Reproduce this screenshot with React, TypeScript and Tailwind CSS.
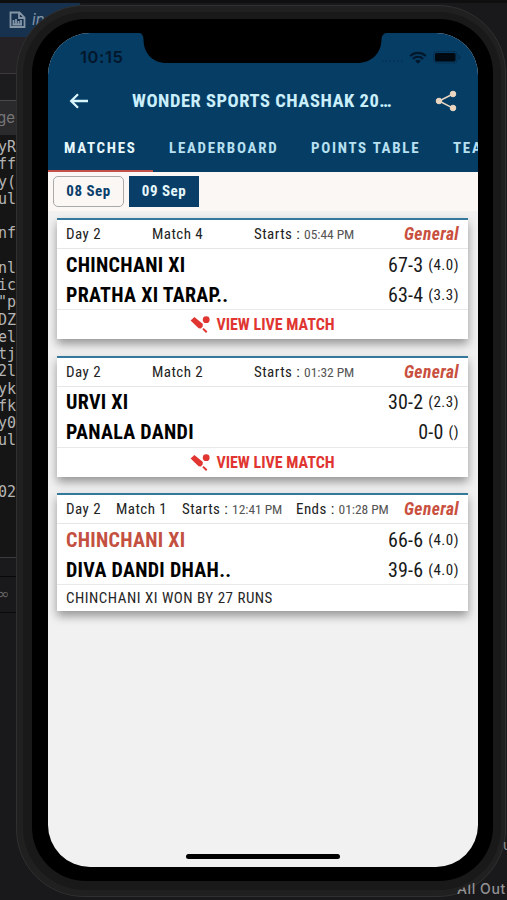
import React from "react";

const codeLines = ["yR", "ff", "y(", "ul", "", "nf", "", "nl", "ic", '"p', "DZ", "el", "tj", "2l", "yk", "fk", "y0", "ul", "", "", "02"];

type Match = {
  no: number;
  starts: string;
  ends?: string;
  teams: { name: string; score: string; overs: string; won?: boolean }[];
  result?: string;
};

const matches: Match[] = [
  {
    no: 4,
    starts: "05:44 PM",
    teams: [
      { name: "CHINCHANI XI", score: "67-3", overs: "(4.0)" },
      { name: "PRATHA XI TARAP..", score: "63-4", overs: "(3.3)" },
    ],
  },
  {
    no: 2,
    starts: "01:32 PM",
    teams: [
      { name: "URVI XI", score: "30-2", overs: "(2.3)" },
      { name: "PANALA DANDI", score: "0-0", overs: "()" },
    ],
  },
  {
    no: 1,
    starts: "12:41 PM",
    ends: "01:28 PM",
    teams: [
      { name: "CHINCHANI XI", score: "66-6", overs: "(4.0)", won: true },
      { name: "DIVA DANDI DHAH..", score: "39-6", overs: "(4.0)" },
    ],
    result: "CHINCHANI XI WON BY 27 RUNS",
  },
];

function BatIcon() {
  return (
    <svg width="20" height="18" viewBox="0 0 20 18" fill="#e03531" className="shrink-0">
      <path d="M0.600 4.600 4.400 1.100 12.900 8 12.600 10.200 11 12.600 8.600 12.200Z" />
      <path d="m12.300 13.200 1.400-1.300 3.700 3.700-1.400 1.400Z" />
      <circle cx="16.200" cy="3.700" r="3.400" />
    </svg>
  );
}

function MatchCard({ match }: { match: Match }) {
  const finished = Boolean(match.ends);
  return (
    <section className="border-t-2 border-[#34789b] bg-white shadow-[0_5px_9px_rgba(0,0,0,0.38)]">
      <div className="flex h-[29px] items-center whitespace-nowrap border-b border-[#e6e6e6] px-[9px] pt-px text-[15px] tracking-[0.45px] text-[#222]">
        <span className={finished ? "w-[50px]" : "w-[86px]"}>Day 2</span>
        <span className={finished ? "w-[66px]" : "w-[102px]"}>Match {match.no}</span>
        <span className={finished ? "w-[114px]" : ""}>
          Starts : <span className="text-[13.5px] tracking-[-0.05px] text-[#555]">{match.starts}</span>
        </span>
        {finished && (
          <span>
            Ends : <span className="text-[13.5px] tracking-[-0.05px] text-[#555]">{match.ends}</span>
          </span>
        )}
        <span className="-mt-px ml-auto text-[17.5px] font-bold italic leading-5 tracking-[0.4px] text-[#c94f3e]">General</span>
      </div>
      <div className="h-[60px]">
        {match.teams.map((team) => (
          <div key={team.name} className="flex h-[30px] items-center justify-between px-[9px] pt-px">
            <span className={`text-[20px] font-bold leading-6 tracking-[0.3px] ${team.won ? "text-[#c4503f]" : "text-black"}`}>
              {team.name}
            </span>
            <span className="flex items-center gap-[5px] text-[20px] leading-6 tracking-[0.15px] text-[#191919]">
              {team.score}
              <span className="text-[15px] tracking-[0.5px]">{team.overs}</span>
            </span>
          </div>
        ))}
      </div>
      {match.result ? (
        <div className="flex h-[27px] items-center border-t border-[#e9e9e9] pl-[9px] text-[15px] leading-5 tracking-[0.5px] text-[#262626]">
          {match.result}
        </div>
      ) : (
        <div className="flex h-[30px] items-center justify-center gap-[6px] border-t border-[#e9e9e9] pt-px text-[16px] font-bold text-[#e03531]">
          <BatIcon />
          VIEW LIVE MATCH
        </div>
      )}
    </section>
  );
}

function StatusBar() {
  return (
    <div className="flex h-[46px] shrink-0 justify-between pl-8 pr-[17px] pt-[13px] text-[#03172a]">
      <span className="font-['Inter',sans-serif] text-[16.5px] font-semibold leading-[22px] tracking-[0.6px] [font-stretch:100%]">10:15</span>
      <div className="flex h-[22px] items-center gap-[6px]">
        <span className="mt-2 w-[21px] border-t-2 border-dotted border-[#06355a]" />
        <svg width="18" height="13" viewBox="0 0 18 13" fill="none" stroke="currentColor" strokeWidth="2.1">
          <path d="M1.2 5a11.2 11.2 0 0 1 15.6 0M3.9 7.9a7.3 7.3 0 0 1 10.2 0" />
          <path d="M6.2 10.1a4 4 0 0 1 5.6 0L9 12.8Z" fill="currentColor" stroke="none" />
        </svg>
        <svg width="28" height="13" viewBox="0 0 28 13">
          <rect x="0.6" y="0.6" width="23.5" height="11.4" rx="3" fill="none" stroke="#063050" />
          <rect x="2" y="2" width="20.5" height="8.6" rx="1.5" fill="#000810" />
          <path d="M25.5 4v4.5q2-.5 2-2.2T25.5 4" fill="#063050" />
        </svg>
      </div>
    </div>
  );
}

function AppHeader() {
  return (
    <header className="h-[139px] shrink-0 bg-[#053d65]">
      <StatusBar />
      <div className="flex h-[43px] items-center pl-[21px] pr-[21px]">
        <svg width="20" height="16" viewBox="0 0 20 16" fill="none" stroke="#d8f5fb" strokeWidth="2.3" className="shrink-0">
          <path d="M9 1.3 2.2 8 9 14.7M2.4 8H19" />
        </svg>
        <h1 className="ml-[43px] w-[268px] whitespace-nowrap text-[18.5px] font-bold leading-6 tracking-[0.52px] text-[#caeffb]">
          WONDER SPORTS CHASHAK 20…
        </h1>
        <svg width="22" height="22" viewBox="0 0 22 22" fill="#ead6c0" stroke="#ead6c0" className="ml-auto shrink-0">
          <path d="M18 4 4 11l14 7.2" fill="none" strokeWidth="1.5" />
          <circle cx="18" cy="4" r="2.800" />
          <circle cx="4" cy="11" r="2.800" />
          <circle cx="18" cy="18" r="2.800" />
        </svg>
      </div>
      <nav className="flex h-[50px] overflow-hidden whitespace-nowrap text-[15px] font-bold tracking-[1.7px] text-[#b7e0f1]">
        <span className="flex w-[105px] shrink-0 items-center border-b-2 border-[#c45147] pl-4 pt-[5px] text-[#e6f8fc]">MATCHES</span>
        <span className="flex w-[142px] shrink-0 items-center pl-4 pt-[3px]">LEADERBOARD</span>
        <span className="flex w-[142px] shrink-0 items-center pl-4 pt-[3px]">POINTS TABLE</span>
        <span className="flex shrink-0 items-center pl-4 pt-[3px]">TEAMS</span>
      </nav>
    </header>
  );
}

function Phone() {
  return (
    <div className="absolute left-4 top-[5px] h-[892px] w-[490px] rounded-[68px] border border-[#303030] bg-[#202020] py-[6px] pl-[6px] pr-1">
      <div className="h-full rounded-[62px] bg-[#191919] pb-[9px] pl-[9px] pr-2 pt-[7px]">
        <div className="h-full rounded-[54px] bg-black px-4 pb-[15px] pt-[14px]">
          <div className="relative flex h-[834px] w-[429.500px] flex-col overflow-hidden rounded-[42px] bg-[#f1f1f1] font-['Roboto',sans-serif] [font-stretch:75%]">
            <AppHeader />
            <div className="flex h-[39px] shrink-0 gap-[5px] bg-[#faf7f5] pl-[5px] pt-1 text-[15px] font-bold tracking-[0.5px] text-[#0b3f6b]">
              <span className="flex h-[31px] w-[71px] items-center justify-center rounded-[5px] border border-[#aaa]">08 Sep</span>
              <span className="flex h-[31px] w-[70px] items-center justify-center bg-[#083e68] text-[#e6f7fb]">09 Sep</span>
            </div>
            <main className="flex flex-col gap-[16.5px] pl-[9px] pr-[9.5px] pt-[7px]">
              {matches.map((match) => (
                <MatchCard key={match.no} match={match} />
              ))}
            </main>
            <div className="mx-auto mb-2 mt-auto h-[5px] w-[154px] rounded-full bg-black" />
            <svg className="absolute left-[92px] top-0" width="246" height="31" viewBox="0 0 246 31">
              <path d="M0 0Q3 1 3.500 6C3.500 20 12 30 27 30H217C232 30 241.500 20 241.500 6Q242 1 246 0Z" fill="#000" />
            </svg>
          </div>
        </div>
      </div>
    </div>
  );
}

export default function App() {
  return (
    <div className="relative flex h-[900px] w-[507px] flex-col overflow-hidden bg-[#19181b]">
      <div className="h-[3px] shrink-0 bg-[#100f10]" />
      <div className="flex h-[34px] w-20 shrink-0 items-center gap-[6px] bg-[#16324f] pl-[9px] text-[#8495a6]">
        <svg width="17" height="18" viewBox="0 0 17 18" fill="none" stroke="currentColor" strokeWidth="1.8">
          <path d="M1.500 1.500h9l5 5v9.500h-14ZM10 2v5h5M4.500 9v4M7 8v5M9.500 10v3M12 9v4M3.500 13.500h9.500" />
        </svg>
        <span className="font-['Inter',sans-serif] text-[15px] italic">in</span>
      </div>
      <div className="h-[37px] w-20 shrink-0 border-b border-[#3b393b] bg-[#242225]" />
      <div className="h-[27px] w-20 shrink-0 border-b border-[#4a484b] bg-[#1c1b1d]" />
      <div className="flex h-[34px] w-4 shrink-0 items-center overflow-hidden bg-[#2a292c] font-['Inter',sans-serif] text-[15px] text-[#777]">
        <span className="-ml-[3px]">ge</span>
      </div>
      <div className="h-[422px] w-4 shrink-0 overflow-hidden bg-[#151516] pt-1 font-['DejaVu_Sans_Mono',monospace] text-[15px] leading-[17.25px] text-[#b4b4b4]">
        {codeLines.map((line, index) => (
          <div key={index} className="-ml-[2px] h-[17.25px] whitespace-pre">{line}</div>
        ))}
      </div>
      <div className="h-5 w-4 shrink-0 border-b border-t border-b-[#080808] border-t-[#3b3a3c] bg-[#1a191b]" />
      <div className="flex h-[36px] w-4 shrink-0 items-center overflow-hidden border-b border-[#080808] text-[15px] text-[#666]">
        <span className="-ml-[3px] font-['DejaVu_Sans',sans-serif]">∞</span>
      </div>
      <Phone />
      <span className="absolute left-[503px] top-[837px] font-['Inter',sans-serif] text-[14px] leading-4 text-[#929294]">u</span>
      <span className="absolute left-[457px] top-[880px] whitespace-nowrap font-['Inter',sans-serif] text-[14px] font-medium leading-[18px] tracking-[0.6px] text-[#929294] [clip-path:polygon(0_60%,45%_0,100%_0,100%_100%,0_100%)]">
        All Out
      </span>
    </div>
  );
}
